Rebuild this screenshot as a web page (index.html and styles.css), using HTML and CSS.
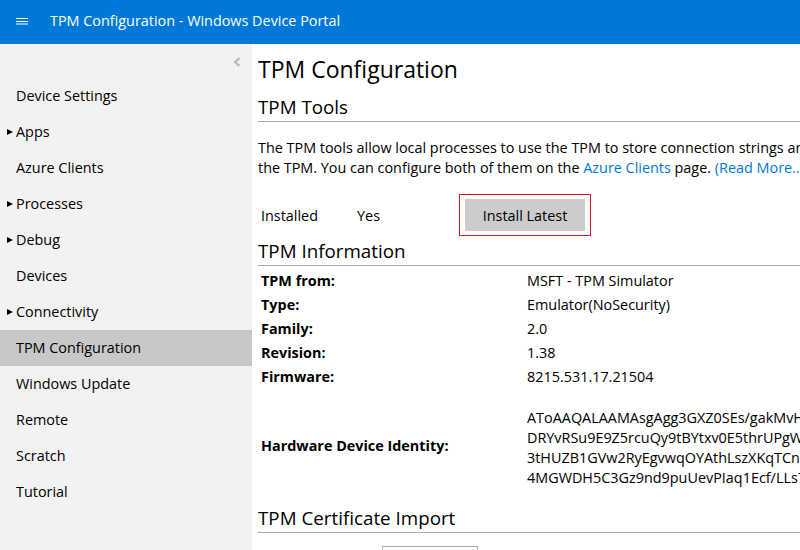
FILE: index.html
```html
<!DOCTYPE html>
<html lang="en">
<head>
<meta charset="utf-8">
<title>TPM Configuration - Windows Device Portal</title>
<link rel="stylesheet" href="styles.css">
</head>
<body>
<header class="topbar">
  <svg class="hamburger" width="12" height="7" viewBox="0 0 12 7"><rect x="0" y="0" width="12" height="1" fill="#fff"/><rect x="0" y="3" width="12" height="1" fill="#fff"/><rect x="0" y="5.5" width="12" height="1" fill="#fff"/></svg>
  <span class="topbar-title">TPM Configuration - Windows Device Portal</span>
</header>
<div class="layout">
  <nav class="sidebar">
    <div class="collapse-row">
      <svg class="chevron" width="8" height="10" viewBox="0 0 8 10"><polyline points="6.5,1 2,5 6.5,9" fill="none" stroke="#bdbdbd" stroke-width="2.4"/></svg>
    </div>
    <ul class="nav">
      <li class="nav-item"><span class="caret"></span>Device Settings</li>
      <li class="nav-item"><span class="caret has-children"></span>Apps</li>
      <li class="nav-item"><span class="caret"></span>Azure Clients</li>
      <li class="nav-item"><span class="caret has-children"></span>Processes</li>
      <li class="nav-item"><span class="caret has-children"></span>Debug</li>
      <li class="nav-item"><span class="caret"></span>Devices</li>
      <li class="nav-item"><span class="caret has-children"></span>Connectivity</li>
      <li class="nav-item active"><span class="caret"></span>TPM Configuration</li>
      <li class="nav-item"><span class="caret"></span>Windows Update</li>
      <li class="nav-item"><span class="caret"></span>Remote</li>
      <li class="nav-item"><span class="caret"></span>Scratch</li>
      <li class="nav-item"><span class="caret"></span>Tutorial</li>
    </ul>
  </nav>
  <main class="main">
    <div class="content">
      <h1 class="page-title">TPM Configuration</h1>

      <h2 class="section-title first">TPM Tools</h2>
      <p class="intro">The TPM tools allow local processes to use the TPM to store connection strings and keys for Azure clients, which are protected by<br>the TPM. You can configure both of them on the <a href="#" class="link">Azure Clients</a> page. <a href="#" class="link">(Read More...)</a></p>

      <div class="install-row">
        <span class="install-label">Installed</span>
        <span class="install-value">Yes</span>
        <span class="install-box"><button class="install-btn" type="button">Install Latest</button></span>
      </div>

      <h2 class="section-title">TPM Information</h2>
      <table class="info">
        <tr><th>TPM from:</th><td>MSFT - TPM Simulator</td></tr>
        <tr><th>Type:</th><td>Emulator(NoSecurity)</td></tr>
        <tr><th>Family:</th><td>2.0</td></tr>
        <tr><th>Revision:</th><td>1.38</td></tr>
        <tr><th>Firmware:</th><td>8215.531.17.21504</td></tr>
        <tr class="identity"><th>Hardware Device Identity:</th><td>AToAAQALAAMAsgAgg3GXZ0SEs/gakMvHq2bQ0uZqCkE8Lr1N<br>DRYvRSu9E9Z5rcuQy9tBYtxv0E5thrUPgW1aK7sXo2vLm4<br>3tHUZB1GVw2RyEgvwqOYAthLszXKqTCn8pFe0Jd6Ryq1Mz<br>4MGWDH5C3Gz9nd9puUevPIaq1Ecf/LLs7eQwXo2Tg5vBnA</td></tr>
      </table>

      <h2 class="section-title">TPM Certificate Import</h2>
      <div class="import-row">
        <span class="file-btn"></span>
      </div>
    </div>
  </main>
</div>
</body>
</html>
```
FILE: styles.css
```css
* { box-sizing: border-box; }
html, body { margin: 0; padding: 0; height: 100%; overflow: hidden; }
body {
  font-family: "Segoe UI", "Open Sans", "Noto Sans", sans-serif;
  font-size: 14.4px;
  color: #000;
  background: #fff;
}
.topbar {
  height: 44px;
  background: #0078d7;
  color: #fff;
  display: flex;
  align-items: center;
  padding-left: 16px;
}
.hamburger { display: block; margin-top: -2px; }
.topbar-title {
  margin-left: 22px;
  font-size: 14.4px;
  margin-top: -4px;
}
.layout {
  display: flex;
  height: calc(100% - 44px);
}
.sidebar {
  width: 252px;
  flex: 0 0 252px;
  background: #f2f2f2;
}
.collapse-row {
  height: 34px;
  display: flex;
  justify-content: flex-end;
  padding: 13px 11px 0 0;
}
.chevron { display: block; }
.nav { list-style: none; margin: 0; padding: 0; }
.nav-item {
  height: 36px;
  display: flex;
  align-items: center;
  font-size: 14.4px;
  padding-bottom: 1px;
}
.nav-item.active { background: #c8c8c8; }
.caret {
  width: 16px;
  flex: 0 0 16px;
  display: flex;
  padding-left: 7px;
}
.caret.has-children::before {
  content: "";
  display: block;
  border-left: 6px solid #000;
  border-top: 3.5px solid transparent;
  border-bottom: 3.5px solid transparent;
}
.main {
  flex: 1;
  min-width: 0;
  overflow: hidden;
  background: #fff;
}
.content {
  width: 1000px;
  padding: 9px 0 0 6px;
}
.page-title {
  margin: 0;
  font-size: 23px;
  font-weight: 400;
  line-height: 32px;
}
.section-title {
  margin: 3px 0 0;
  font-size: 18.8px;
  font-weight: 400;
  line-height: 24px;
  padding-bottom: 2px;
  border-bottom: 1px solid #ababab;
}
.section-title.first { margin-top: 10px; }
.intro {
  margin: 16px 0 0;
  line-height: 20px;
  white-space: nowrap;
}
.link { color: #0078d7; text-decoration: none; }
.install-row {
  margin-top: 16px;
  height: 42px;
  display: flex;
  align-items: center;
  padding-left: 3px;
}
.install-label { width: 96px; }
.install-value { width: 102px; }
.install-box {
  border: 1px solid #e81123;
  padding: 4px 5px;
  display: flex;
}
.install-btn {
  width: 120px;
  height: 32px;
  border: none;
  background: #cccccc;
  font-family: inherit;
  font-size: 14.4px;
  color: #000;
  padding: 0;
}
.info {
  border-collapse: collapse;
  margin-top: 3px;
}
.info th, .info td {
  padding: 2px 0;
  line-height: 20px;
  text-align: left;
  vertical-align: middle;
  white-space: nowrap;
}
.info th {
  font-weight: 700;
  width: 269px;
  padding-left: 3px;
}
.info .identity td { padding: 19px 0 15px; }
.import-row {
  margin-top: 13px;
  padding-left: 124px;
}
.file-btn {
  display: block;
  width: 96px;
  height: 30px;
  border: 1px solid #adadad;
  background: #fff;
}
```
